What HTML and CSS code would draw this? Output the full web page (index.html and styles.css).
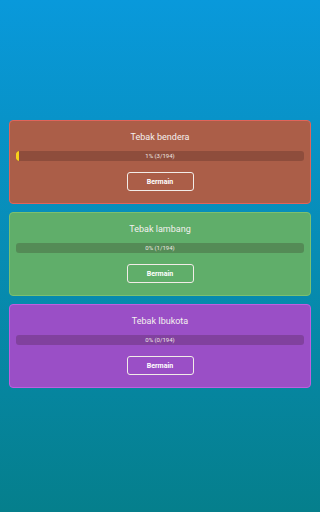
FILE: index.html
```html
<!DOCTYPE html>
<html>
<head>
<meta charset="utf-8">
<link rel="stylesheet" href="styles.css">
</head>
<body>
<main class="screen">
  <section class="card card-red">
    <div class="title">Tebak bendera</div>
    <div class="bar">
      <div class="fill" style="width:1%"></div>
      <span class="bar-text">1% (3/194)</span>
    </div>
    <button class="play">Bermain</button>
  </section>
  <section class="card card-green">
    <div class="title">Tebak lambang</div>
    <div class="bar">
      <span class="bar-text">0% (1/194)</span>
    </div>
    <button class="play">Bermain</button>
  </section>
  <section class="card card-purple">
    <div class="title">Tebak Ibukota</div>
    <div class="bar">
      <span class="bar-text">0% (0/194)</span>
    </div>
    <button class="play">Bermain</button>
  </section>
</main>
</body>
</html>
```
FILE: styles.css
```css
html, body {
  margin: 0;
  padding: 0;
  height: 100%;
}
body {
  background: linear-gradient(to bottom, #0999db 0%, #057f8c 100%);
  font-family: Roboto, "Noto Sans", sans-serif;
  color: #fff;
}
.screen {
  box-sizing: border-box;
  height: 512px;
  padding: 120px 9px 0 9px;
  display: flex;
  flex-direction: column;
  gap: 8px;
}
.card {
  box-sizing: border-box;
  height: 84px;
  border: 1px solid;
  border-radius: 4px;
  padding: 9px 6px 0 6px;
  display: flex;
  flex-direction: column;
  align-items: center;
}
.card-red { background: #ab5e48; border-color: #e0645a; }
.card-green { background: #60ae6a; border-color: #7cc070; }
.card-purple { background: #9a4fc6; border-color: #c05ee0; }
.title {
  font-size: 9px;
  line-height: 14px;
  height: 14px;
  color: #f4f0ee;
}
.bar {
  position: relative;
  align-self: stretch;
  height: 10px;
  margin-top: 7px;
  border-radius: 3px;
  background: rgba(40, 20, 20, 0.22);
  overflow: hidden;
}
.fill {
  height: 100%;
  min-width: 3px;
  background: #f7d11a;
  border-radius: 3px 0 0 3px;
}
.bar-text {
  position: absolute;
  inset: 0;
  text-align: center;
  font-size: 6px;
  line-height: 10px;
  color: #f0e8e4;
}
.play {
  margin-top: 11px;
  width: 67px;
  height: 19px;
  box-sizing: border-box;
  background: transparent;
  border: 1px solid #f2ece8;
  border-radius: 3px;
  color: #fff;
  font-family: Roboto, "Noto Sans", sans-serif;
  font-weight: bold;
  font-size: 7px;
  padding: 0;
}
```
